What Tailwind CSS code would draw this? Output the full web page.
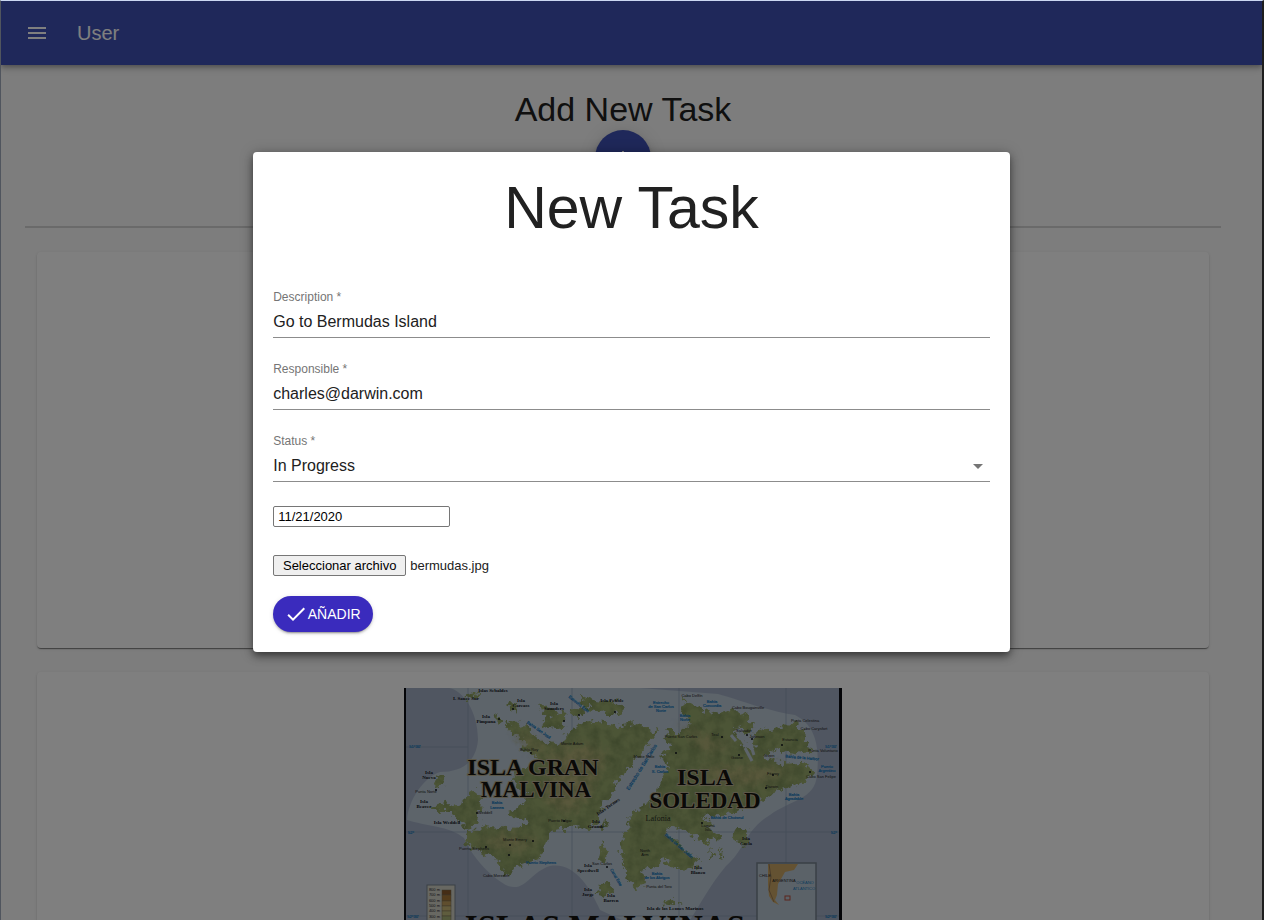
<!DOCTYPE html>
<html lang="es">
<head>
<meta charset="utf-8">
<meta name="viewport" content="width=device-width, initial-scale=1">
<title>User</title>
<script src="https://cdn.jsdelivr.net/npm/@tailwindcss/browser@4"></script>
</head>
<body class="bg-[#1c1c1c] font-['Liberation_Sans',Arial,sans-serif] text-[#212121]">
<div class="relative flex h-screen flex-col overflow-hidden border-t border-r-2 border-l border-t-[#cbd8f2] border-r-[#1e1e1e] border-l-[#50555e] bg-[#fafafa]">

  <header class="z-10 flex h-16 shrink-0 items-center bg-[#3f51b5] px-6 text-white shadow-[0_2px_4px_-1px_rgba(0,0,0,0.2),0_4px_5px_rgba(0,0,0,0.14),0_1px_10px_rgba(0,0,0,0.12)]">
    <button type="button" aria-label="Menu" class="mr-7">
      <svg class="size-6" viewBox="0 0 24 24" fill="currentColor"><path d="M3 18h18v-2H3v2zm0-5h18v-2H3v2zm0-7v2h18V6H3z"/></svg>
    </button>
    <p class="text-xl">User</p>
  </header>

  <main class="flex-1 overflow-hidden pt-6 pr-[41px] pl-6">
    <div class="flex flex-col items-center">
      <h1 class="pb-px text-[34px] leading-10">Add New Task</h1>
      <button type="button" aria-label="Add" class="flex size-14 items-center justify-center rounded-full bg-[#3f51b5] text-white shadow-[0_3px_5px_-1px_rgba(0,0,0,0.2),0_6px_10px_rgba(0,0,0,0.14),0_1px_18px_rgba(0,0,0,0.12)]">
        <svg class="size-6" viewBox="0 0 24 24" fill="currentColor"><path d="M19 13h-6v6h-2v-6H5v-2h6V5h2v6h6v2z"/></svg>
      </button>
    </div>
    <hr class="mt-10 border-t-2 border-[#d4d4d4]">
    <div class="flex flex-col gap-6 px-3 pt-6">
      <article class="h-[396px] rounded bg-white shadow-[0_2px_1px_-1px_rgba(0,0,0,0.3),0_1px_1px_rgba(0,0,0,0.2),0_1px_3px_rgba(0,0,0,0.12)]"></article>
      <article class="flex justify-center rounded bg-white p-4 shadow-[0_2px_1px_-1px_rgba(0,0,0,0.3),0_1px_1px_rgba(0,0,0,0.2),0_1px_3px_rgba(0,0,0,0.12)]">
        <svg class="w-[438px]" viewBox="404 688 438 300" role="img" aria-label="Islas Malvinas">
          <defs>
            <filter id="coast" x="-5%" y="-5%" width="110%" height="110%" color-interpolation-filters="sRGB">
              <feTurbulence type="fractalNoise" baseFrequency="0.16" numOctaves="3" seed="7" result="n"/>
              <feDisplacementMap in="SourceGraphic" in2="n" scale="13" xChannelSelector="R" yChannelSelector="G" result="land"/>
              <feTurbulence type="fractalNoise" baseFrequency="0.09" numOctaves="4" seed="3"/>
              <feColorMatrix values="0 0 0 0 0.42  0 0 0 0 0.5  0 0 0 0 0.3  1.2 0 0 0 -0.4"/>
              <feComposite in2="land" operator="in" result="relief"/>
              <feMerge><feMergeNode in="land"/><feMergeNode in="relief"/></feMerge>
            </filter>
            <filter id="soft"><feGaussianBlur stdDeviation="5"/></filter>
            <clipPath id="frame"><rect x="406" y="688" width="433" height="300"/></clipPath>
          </defs>
          <rect x="404" y="688" width="438" height="300" fill="#080a10"/>
          <g clip-path="url(#frame)">
            <rect x="406" y="688" width="433" height="300" fill="#a1adc2"/>
            <path fill="#bac8d5" d="M449 688C462 690 478 710 478 740C476 762 462 772 440 772C425 776 408 800 407 820C425 826 450 826 464 838C474 860 492 878 508 886C526 892 530 872 550 866C575 862 590 888 600 910L622 920H690C700 905 710 885 726 866C745 850 745 830 770 815C790 800 815 800 817 775C820 745 815 725 795 715C770 712 740 700 718 694L640 688Z"/>
            <g stroke="#8195ab" stroke-width="0.6" fill="none">
              <path d="M406 747H468M406 832L839 832M406 916H839M468 688V988M572 688V988M679 688V988M786 688V988"/>
            </g>
            <g filter="url(#coast)">
              <g fill="#99aa6d">
                <path d="M504 719L509 722 517 723 526 727 533 735 545 742 560 745 566 737 575 727 587 720 604 722 618 726 634 723 646 729 659 731 647 745 636 760 622 775 609 796 601 810 596 823 586 830 575 826 562 830 549 832 546 846 539 859 527 863 514 868 508 877 501 869 498 858 484 853 471 848 464 838 466 830 480 831 486 825 506 828 521 829 527 819 512 817 511 810 525 804 526 793 516 788 512 780 520 770 533 765 536 755 519 750 528 744 523 737 513 735 506 727Z"/>
                <path d="M430 806L443 803 453 807 464 799 475 790 481 800 480 812 476 822 470 829 461 824 452 812 439 812Z"/>
                <path d="M434 780l7-4 4 5-8 9zM508 702l8 3 1 7-8-4zM496 716l4 2-1 6-4-4zM538 703l14 7 12 3 2 10-8 5-15-2-2-4 9-5-9-6zM570 710l12-2 2 9-9 1zM580 695l14 6 15 2 8-3 7 8-8 8-16-5-16-4zM468 694l14-3-6 5-14 3z"/>
                <path d="M684 700L697 707 713 714 731 709 745 714 754 724 749 736 739 727 734 734 745 744 753 751 755 733 767 728 784 727 793 722 802 731 807 742 814 752 801 754 782 751 769 749 765 758 781 764 802 763 815 772 806 782 793 786 777 791 764 800 750 805 737 813 720 814 702 815 714 826 704 829 718 832 720 843 710 838 706 846 696 838 682 829 666 827 667 834 676 841 686 851 698 861 692 869 678 870 663 857 655 866 643 870 645 885 636 888 628 878 623 861 620 848 625 831 631 817 645 803 657 795 661 780 669 764 659 757 672 748 663 737 669 731 682 731 691 724 683 713Z"/>
                <path d="M732 831l8-3 8 3-3 14-9-4zM604 819l4 8-7 2zM602 843l6 8-2 11-7-3zM599 887l7-6 8 10-7 5-11-3zM660 904l10-4 10 3-10 2zM710 849l5 5-3 3zM717 845l6 8-2 4zM694 853l4 12-4 2z"/>
              </g>
              <g fill="#bdb37c" filter="url(#soft)" opacity="0.75">
                <path d="M550 752L590 744 606 757 588 797 565 815 544 799zM475 843L502 834 539 838 517 852zM515 729L546 748 542 756 520 740zM679 722L704 736 735 748 704 752zM705 765L794 770 762 784 712 785z"/>
              </g>
            </g>
            <path d="M622 790Q642 769 661 736" stroke="#bac8d5" stroke-width="5" fill="none"/>
            <path d="M736 730l8 13 7 3 3 9M731 735l5 6M745 748l7 13" stroke="#bac8d5" stroke-width="3" fill="none"/>

            <g font-family="'Liberation Sans', Arial, sans-serif" font-size="4" fill="#1675b8" stroke="#1675b8" stroke-width="0.2" text-anchor="middle">
              <text x="415" y="748">51°30'</text><text x="831" y="748">51°30'</text>
              <text x="411" y="834">52°</text><text x="834" y="834">52°</text><text x="413" y="918">52°30'</text><text x="831" y="918">52°30'</text>
              <text x="661" y="704">Estrecho<tspan x="661" dy="4">de San Carlos</tspan><tspan x="661" dy="4">Norte</tspan></text>
              <text x="712" y="703">Bahía<tspan x="712" dy="4">Concordia</tspan></text>
              <text x="685" y="717">Bahía<tspan x="685" dy="4">Norte</tspan></text>
              <text transform="translate(538 731) rotate(35)">Bahía San José</text>
              <text transform="translate(578 705) rotate(38)">Estrecho Este</text>
              <text transform="translate(643 768) rotate(-58)" font-size="5">Estrecho de San Carlos</text>
              <text x="497" y="804">Bahía<tspan x="497" dy="5">Lannea</tspan></text>
              <text x="660" y="768">Bahía<tspan x="660" dy="5">S. Carlos</tspan></text>
              <text x="541" y="864">Puerto Stephens</text>
              <text transform="translate(802 759) rotate(5)">Bahía de la Harbor</text>
              <text x="827" y="768">Puerto<tspan x="827" dy="4">Argentino</tspan></text>
              <text x="794" y="796">Bahía<tspan x="794" dy="4">Agradable</tspan></text>
              <text x="727" y="819">Bahía de Choiseul</text>
              <text transform="translate(678 847) rotate(41)">Bahía de San Julián</text>
              <text x="657" y="875">Bahía<tspan x="657" dy="4">de los Abrigos</tspan></text>
              <text transform="translate(615 878) rotate(60)">Canal Este</text>
            </g>

            <g font-family="'Liberation Serif', serif" font-size="5" font-weight="700" fill="#11151b" text-anchor="middle">
              <text x="493" y="692">Islas Sebaldes</text><text x="466" y="700">I. Sauce Sur</text>
              <text x="521" y="702">Isla<tspan x="521" dy="5">Carcass</tspan></text>
              <text x="486" y="718">Isla<tspan x="486" dy="5">Pimpana</tspan></text>
              <text x="554" y="705">Isla<tspan x="554" dy="5">Saunders</tspan></text>
              <text x="612" y="702">Isla Pebble</text>
              <text x="429" y="774">Isla<tspan x="429" dy="5">Nueva</tspan></text>
              <text x="424" y="803">Isla<tspan x="424" dy="5">Beaver</tspan></text>
              <text x="447" y="824">Isla Weddell</text>
              <text x="596" y="823">Isla<tspan x="596" dy="5">Grande</tspan></text>
              <text transform="translate(609 808) rotate(-35)">Islas Tormes</text>
              <text x="588" y="867">Isla<tspan x="588" dy="5">Speedwell</tspan></text>
              <text x="588" y="891">Isla<tspan x="588" dy="5">Jorge</tspan></text>
              <text x="611" y="897">Isla<tspan x="611" dy="5">Barren</tspan></text>
              <text x="746" y="840">Isla<tspan x="746" dy="5">Coela</tspan></text>
              <text x="698" y="869">Isla<tspan x="698" dy="5">Blanco</tspan></text>
              <text x="675" y="910">Isla de los Leones Marinos</text>
            </g>
            <g font-family="'Liberation Sans', Arial, sans-serif" font-size="4" fill="#1c2120" text-anchor="middle">
              <text x="692" y="697">Cabo Delfín</text><text x="748" y="709">Cabo Bougainville</text><text x="805" y="722">Punta Celestina</text>
              <text x="814" y="730">Cabo Carysfort</text><text x="681" y="738">Puerto San Carlos</text><text x="715" y="736">Teal</text>
              <text x="744" y="732">Salvador</text><text x="757" y="738">Johnson</text><text x="790" y="741">Estancia</text><text x="823" y="752">Punta Voluntario</text>
              <text x="737" y="759">Goose</text><text x="769" y="757">Green</text><text x="773" y="775">Fitzroy</text><text x="772" y="788">Darwin</text><text x="821" y="778">Cabo San Felipe</text>
              <text x="426" y="793">Punta Norte</text><text x="529" y="751">Bahía Roy</text><text x="485" y="814">Weddell</text><text x="474" y="850">Puerto Stephens</text>
              <text x="515" y="841">Monte Emery</text><text x="496" y="877">Cabo Meredith</text><text x="560" y="822">Puerto Edgar</text><text x="572" y="745">Monte Adam</text>
              <text x="645" y="852">North<tspan x="645" dy="4">Arm</tspan></text><text x="708" y="827">Laguna<tspan x="708" dy="4">Isla</tspan></text><text x="659" y="888">Punta del Toro</text>
              <text x="602" y="865">San Carlos</text><text x="644" y="758">Monte Mole</text>
            </g>
            <g fill="#11151b">
              <circle cx="513" cy="709" r="1"/><circle cx="579" cy="715" r="1"/><circle cx="564" cy="721" r="1"/><circle cx="499" cy="719" r="1"/><circle cx="531" cy="753" r="1"/><circle cx="615" cy="712" r="1"/>
              <circle cx="436" cy="790" r="1"/><circle cx="477" cy="813" r="1"/><circle cx="486" cy="847" r="1"/><circle cx="510" cy="845" r="1"/><circle cx="533" cy="841" r="1"/><circle cx="509" cy="855" r="1"/><circle cx="564" cy="821" r="1"/>
              <circle cx="722" cy="737" r="1"/><circle cx="747" cy="735" r="1"/><circle cx="752" cy="739" r="1"/><circle cx="782" cy="745" r="1"/><circle cx="739" cy="755" r="1"/><circle cx="773" cy="775" r="1"/><circle cx="810" cy="772" r="1"/><circle cx="766" cy="788" r="1"/><circle cx="702" cy="823" r="1"/><circle cx="676" cy="753" r="1"/><circle cx="607" cy="867" r="1"/>
            </g>

            <g font-family="'Liberation Serif', serif" font-weight="700" fill="#14120f" stroke="#b6ae91" stroke-width="2" paint-order="stroke" text-anchor="middle">
              <text x="533" y="775" font-size="24">ISLA GRAN</text>
              <text x="536" y="797" font-size="23">MALVINA</text>
              <text x="705" y="785" font-size="24">ISLA</text>
              <text x="705" y="808" font-size="23">SOLEDAD</text>
              <text x="605" y="938" font-size="33" stroke="none">ISLAS MALVINAS</text>
            </g>
            <text x="658" y="821" font-family="'Liberation Serif', serif" font-size="8" fill="#24291f" text-anchor="middle">Lafonia</text>

            <!-- elevation legend -->
            <rect x="427" y="885" width="28" height="90" fill="#d1d1c5" stroke="#76818b"/>
            <g stroke="#746d55" stroke-width="0.5">
              <rect x="442" y="890" width="9" height="5" fill="#8a5a2a"/><rect x="442" y="895" width="9" height="6" fill="#a87837"/><rect x="442" y="901" width="9" height="5" fill="#bf9c5c"/><rect x="442" y="906" width="9" height="5" fill="#c9b777"/><rect x="442" y="911" width="9" height="5" fill="#bfba7c"/><rect x="442" y="916" width="9" height="5" fill="#a6b076"/>
            </g>
            <g font-family="'Liberation Sans', Arial, sans-serif" font-size="4" fill="#20242a" text-anchor="end">
              <text x="440" y="891">800 m</text><text x="440" y="896">700 m</text><text x="440" y="902">600 m</text><text x="440" y="907">500 m</text><text x="440" y="912">400 m</text><text x="440" y="918">300 m</text>
            </g>

            <!-- locator map -->
            <rect x="757" y="863" width="59" height="80" fill="#b7c5d1" stroke="#737f8c" stroke-width="1.5"/>
            <path d="M768 864H798L794 870 785 872 781 879 778 884 777 895 775 900 779 905 773 902 769 896 768 885Z" fill="#c9a565"/>
            <path d="M769 864l2 13-2 13 5 12" fill="none" stroke="#987953"/>
            <g font-family="'Liberation Sans', Arial, sans-serif" font-size="4" text-anchor="middle">
              <text x="765" y="877" fill="#222">CHILE</text><text x="784" y="882" fill="#222">ARGENTINA</text>
              <text x="805" y="884" fill="#1675b8">OCÉANO</text><text x="804" y="890" fill="#1675b8">ATLÁNTICO</text>
            </g>
            <rect x="785" y="896" width="5" height="4" fill="none" stroke="#b64a39"/>
          </g>
        </svg>
      </article>
    </div>
  </main>

  <!-- backdrop and dialog -->
  <div class="absolute inset-0 z-20 flex items-start justify-center bg-black/50 pt-[151px]">
    <form role="dialog" aria-modal="true" aria-labelledby="dialog-title" class="w-3/5 rounded bg-white p-5 shadow-[0_3px_5px_-1px_rgba(0,0,0,0.2),0_5px_8px_rgba(0,0,0,0.3),0_1px_14px_rgba(0,0,0,0.25)]">
      <h2 id="dialog-title" class="text-center text-[59px] leading-[72px]">New Task</h2>

      <div class="mt-[46px] flex flex-col gap-6">
        <div class="flex h-12 flex-col justify-between border-b border-[#8c8c8c]">
          <label for="description" class="text-xs leading-[14px] text-[#757575]">Description *</label>
          <input id="description" type="text" required value="Go to Bermudas Island" class="h-8 w-full pt-0.5 outline-none">
        </div>
        <div class="flex h-12 flex-col justify-between border-b border-[#8c8c8c]">
          <label for="responsible" class="text-xs leading-[14px] text-[#757575]">Responsible *</label>
          <input id="responsible" type="email" required value="charles@darwin.com" class="h-8 w-full pt-0.5 outline-none">
        </div>
        <div class="relative flex h-12 flex-col justify-between border-b border-[#8c8c8c]">
          <label for="status" class="text-xs leading-[14px] text-[#757575]">Status *</label>
          <select id="status" required class="h-8 w-full appearance-none pt-0.5 outline-none">
            <option>In Progress</option>
          </select>
          <svg class="pointer-events-none absolute right-0 bottom-[3px] size-6 text-[#757575]" viewBox="0 0 24 24" fill="currentColor"><path d="M7 10l5 5 5-5z"/></svg>
        </div>
      </div>

      <input type="text" aria-label="Date" value="11/21/2020" class="mt-6 block h-[21px] w-[177px] rounded-xs border border-[#767676] px-1 text-[13px] text-black">

      <div class="mt-7 flex h-[21px] items-center gap-1 text-[13px]">
        <label for="file" class="flex h-full w-[133px] items-center justify-center rounded-xs border border-[#767676] bg-[#efefef] text-black">Seleccionar archivo</label>
        <input id="file" type="file" class="sr-only">
        <span>bermudas.jpg</span>
      </div>

      <button type="submit" class="mt-5 flex h-9 w-[100px] items-center justify-center rounded-full bg-[#3a2bbd] pr-0.5 text-sm text-white shadow-[0_3px_1px_-2px_rgba(0,0,0,0.2),0_2px_2px_rgba(0,0,0,0.14),0_1px_5px_rgba(0,0,0,0.12)]">
        <svg class="size-6 shrink-0" viewBox="0 0 24 24" fill="currentColor"><path d="M9 16.17L4.83 12l-1.42 1.41L9 19 21 7l-1.41-1.41z"/></svg>
        AÑADIR
      </button>
    </form>
  </div>
</div>
</body>
</html>
